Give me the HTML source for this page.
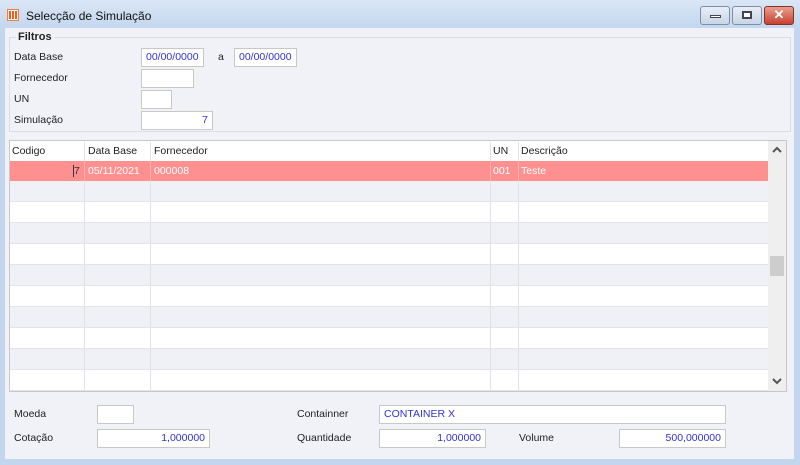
<!DOCTYPE html>
<html><head><style>
*{margin:0;padding:0;box-sizing:border-box}
body{width:800px;height:465px;overflow:hidden;background:#c3d6ee;font-family:"Liberation Sans",sans-serif;font-size:10.5px;color:#222;position:relative}
.a{position:absolute}
.title{left:0;top:0;width:800px;height:30px;background:linear-gradient(#d9e6f5,#c3d6ee)}
.body{left:5px;top:28px;width:789px;height:431px;background:#f0f2f8}
.in{position:absolute;background:#fff;border:1px solid #c8c8c8;height:19px;color:#3333cc;font-size:10.5px;line-height:17px;padding:0 4px}
.r{text-align:right}
.lbl{position:absolute;font-size:10.5px;color:#222}
.btn{position:absolute;top:6px;height:19px;border:1px solid #7d8fa8;border-radius:3px;background:linear-gradient(#e8eef6,#c9d6e6)}
.row{position:absolute;left:10px;width:758px;height:21px;border-bottom:1px solid #e4e4e8}
.vl{position:absolute;top:142px;width:1px;height:248px;background:#e2e2e6}
</style></head><body>
<div class="a title"></div>
<div class="a" style="left:7px;top:9px;width:12px;height:12px;background:#f7f0e8;border:1px solid #f08040"></div>
<div class="a" style="left:9px;top:11px;width:8px;height:8px;background:repeating-linear-gradient(90deg,#f06020 0 2px,#fff 2px 3px)"></div>
<div class="lbl" style="left:26px;top:9px;font-size:12px;color:#111">Selecção de Simulação</div>
<div class="btn" style="left:700px;width:30px"><div class="a" style="left:9px;top:8px;width:11px;height:3px;background:#fff;border:1px solid #445"></div></div>
<div class="btn" style="left:732px;width:30px"><div class="a" style="left:9px;top:4px;width:10px;height:8px;background:#fff;border:2px solid #445"></div></div>
<div class="btn" style="left:764px;width:30px;background:linear-gradient(#e8a090,#c84030);border-color:#8a3020;color:#fff;font-weight:bold;font-size:13px;text-align:center;line-height:16px">✕</div>
<div class="a body"></div>
<div class="a" style="left:9px;top:37px;width:782px;height:95px;border:1px solid #dcdde2"></div>
<div class="lbl" style="left:16px;top:31px;font-weight:bold;background:#f0f2f8;padding:0 2px;font-size:11px">Filtros</div>
<div class="lbl" style="left:14px;top:51px">Data Base</div>
<div class="in" style="left:141px;top:48px;width:63px">00/00/0000</div>
<div class="lbl" style="left:218px;top:51px">a</div>
<div class="in" style="left:234px;top:48px;width:63px">00/00/0000</div>
<div class="lbl" style="left:14px;top:72px">Fornecedor</div>
<div class="in" style="left:141px;top:69px;width:53px"></div>
<div class="lbl" style="left:14px;top:93px">UN</div>
<div class="in" style="left:141px;top:90px;width:31px"></div>
<div class="lbl" style="left:14px;top:114px">Simulação</div>
<div class="in r" style="left:141px;top:111px;width:72px">7</div>
<div class="a" style="left:9px;top:140px;width:778px;height:252px;border:1px solid #c8c8cc;background:#fff"></div>
<div class="lbl" style="left:12px;top:145px">Codigo</div>
<div class="lbl" style="left:88px;top:145px">Data Base</div>
<div class="lbl" style="left:154px;top:145px">Fornecedor</div>
<div class="lbl" style="left:493px;top:145px">UN</div>
<div class="lbl" style="left:521px;top:145px">Descrição</div>
<div class="row" style="top:181px;background:#f0f1f6"></div>
<div class="row" style="top:223px;background:#f0f1f6"></div>
<div class="row" style="top:265px;background:#f0f1f6"></div>
<div class="row" style="top:307px;background:#f0f1f6"></div>
<div class="row" style="top:349px;background:#f0f1f6"></div>
<div class="row" style="top:202px"></div><div class="row" style="top:244px"></div><div class="row" style="top:286px"></div><div class="row" style="top:328px"></div><div class="row" style="top:370px"></div>
<div class="vl" style="left:84px"></div><div class="vl" style="left:150px"></div><div class="vl" style="left:490px"></div><div class="vl" style="left:518px"></div>
<div class="row" style="top:161px;height:20px;background:#ff9090;border:none"></div>
<div class="a" style="left:84px;top:161px;width:1px;height:20px;background:#ffb0b0"></div>
<div class="a" style="left:150px;top:161px;width:1px;height:20px;background:#ffb0b0"></div>
<div class="a" style="left:490px;top:161px;width:1px;height:20px;background:#ffb0b0"></div>
<div class="a" style="left:518px;top:161px;width:1px;height:20px;background:#ffb0b0"></div>
<div class="lbl" style="left:73px;top:165px;color:#333;border-left:1px solid #335">7</div>
<div class="lbl" style="left:88px;top:165px;color:#fff">05/11/2021</div>
<div class="lbl" style="left:154px;top:165px;color:#fff">000008</div>
<div class="lbl" style="left:493px;top:165px;color:#fff">001</div>
<div class="lbl" style="left:521px;top:165px;color:#fff">Teste</div>
<div class="a" style="left:768px;top:141px;width:18px;height:250px;background:#efefef"></div>
<svg class="a" style="left:772px;top:146px" width="10" height="8"><path d="M1 6 L5 2 L9 6" fill="none" stroke="#555" stroke-width="2"/></svg>
<svg class="a" style="left:772px;top:377px" width="10" height="8"><path d="M1 2 L5 6 L9 2" fill="none" stroke="#555" stroke-width="2"/></svg>
<div class="a" style="left:770px;top:256px;width:14px;height:20px;background:#cdcdcd"></div>
<div class="lbl" style="left:14px;top:408px">Moeda</div>
<div class="in" style="left:97px;top:405px;width:37px"></div>
<div class="lbl" style="left:14px;top:432px">Cotação</div>
<div class="in r" style="left:97px;top:429px;width:113px">1,000000</div>
<div class="lbl" style="left:297px;top:408px">Containner</div>
<div class="in" style="left:379px;top:405px;width:347px">CONTAINER X</div>
<div class="lbl" style="left:297px;top:432px">Quantidade</div>
<div class="in r" style="left:379px;top:429px;width:107px">1,000000</div>
<div class="lbl" style="left:519px;top:432px">Volume</div>
<div class="in r" style="left:619px;top:429px;width:107px">500,000000</div>
</body></html>
